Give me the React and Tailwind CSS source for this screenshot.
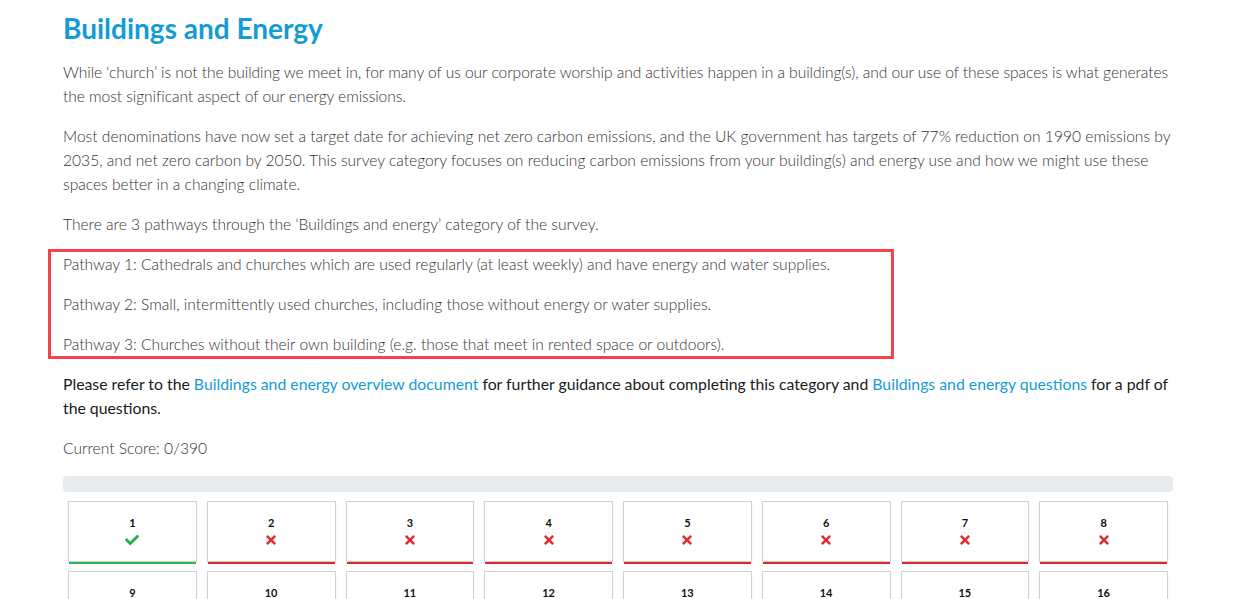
import { FaCheck, FaTimes } from 'react-icons/fa'

const questions = Array.from({ length: 16 }, (_, i) => ({ n: i + 1, done: i === 0 }))

export default function App() {
  return (
    <div className="min-h-screen bg-white font-['Lato',sans-serif]">
      <div className="max-w-[1140px] mx-auto px-[15px]">
        <h1 className="mt-[11px] mb-[15px] text-[28px] leading-[34px] font-bold text-[#139bd6]">
          Buildings and Energy
        </h1>

        <div className="text-[15.6px] leading-6 font-light text-[#333]">
          <p className="mb-4 tracking-[-0.06px]">
            While ‘church’ is not the building we meet in, for many of us our corporate worship and activities happen in a building(s), and our use of these spaces is what generates the most significant aspect of our energy emissions.
          </p>
          <p className="mb-4">
            Most denominations have now set a target date for achieving net zero carbon emissions, and the UK government has targets of 77% reduction on 1990 emissions by 2035, and net zero carbon by 2050. This survey category focuses on reducing carbon emissions from your building(s) and energy use and how we might use these spaces better in a changing climate.
          </p>
          <p className="mb-4">There are 3 pathways through the ‘Buildings and energy’ category of the survey.</p>

          <div className="ml-[-15px] mt-[-3px] mb-[13px] w-[846px] pl-[12px] border-[3px] border-[#f2434b]">
            <p className="mb-4">Pathway 1: Cathedrals and churches which are used regularly (at least weekly) and have energy and water supplies.</p>
            <p className="mb-4">Pathway 2: Small, intermittently used churches, including those without energy or water supplies.</p>
            <p>Pathway 3: Churches without their own building (e.g. those that meet in rented space or outdoors).</p>
          </div>

          <p className="mb-4 text-[15.8px] font-normal text-[#1a1a1a]">
            Please refer to the <a href="#" className="text-[#139bd6]">Buildings and energy overview document</a> for further guidance about completing this category and <a href="#" className="text-[#139bd6]">Buildings and energy questions</a> for a pdf of the questions.
          </p>
          <p className="mb-4">Current Score: 0/390</p>
        </div>

        <div className="h-4 rounded-[4px] bg-[#e9ecef]" />

        <div className="mt-[9px] px-[5px] grid grid-cols-8 gap-x-[10px] gap-y-[7px]">
          {questions.map(({ n, done }) => (
            <div key={n} className="flex flex-col">
              <div className="h-[61px] border border-[#d2d2d2] bg-white shadow-[0_1px_2px_rgba(0,0,0,0.06)] flex flex-col items-center pt-[13px]">
                <span className="text-[11px] leading-4 font-bold text-[#111]">{n}</span>
                {done ? (
                  <FaCheck className="mt-[2px] text-[14px] text-[#22b04b]" />
                ) : (
                  <FaTimes className="mt-[2px] text-[14px] text-[#dc2f34]" />
                )}
              </div>
              <div className={done ? 'h-[2px] mx-px bg-[#2cb84e]' : 'h-[2px] mx-px bg-[#d9272e]'} />
            </div>
          ))}
        </div>
      </div>
    </div>
  )
}
